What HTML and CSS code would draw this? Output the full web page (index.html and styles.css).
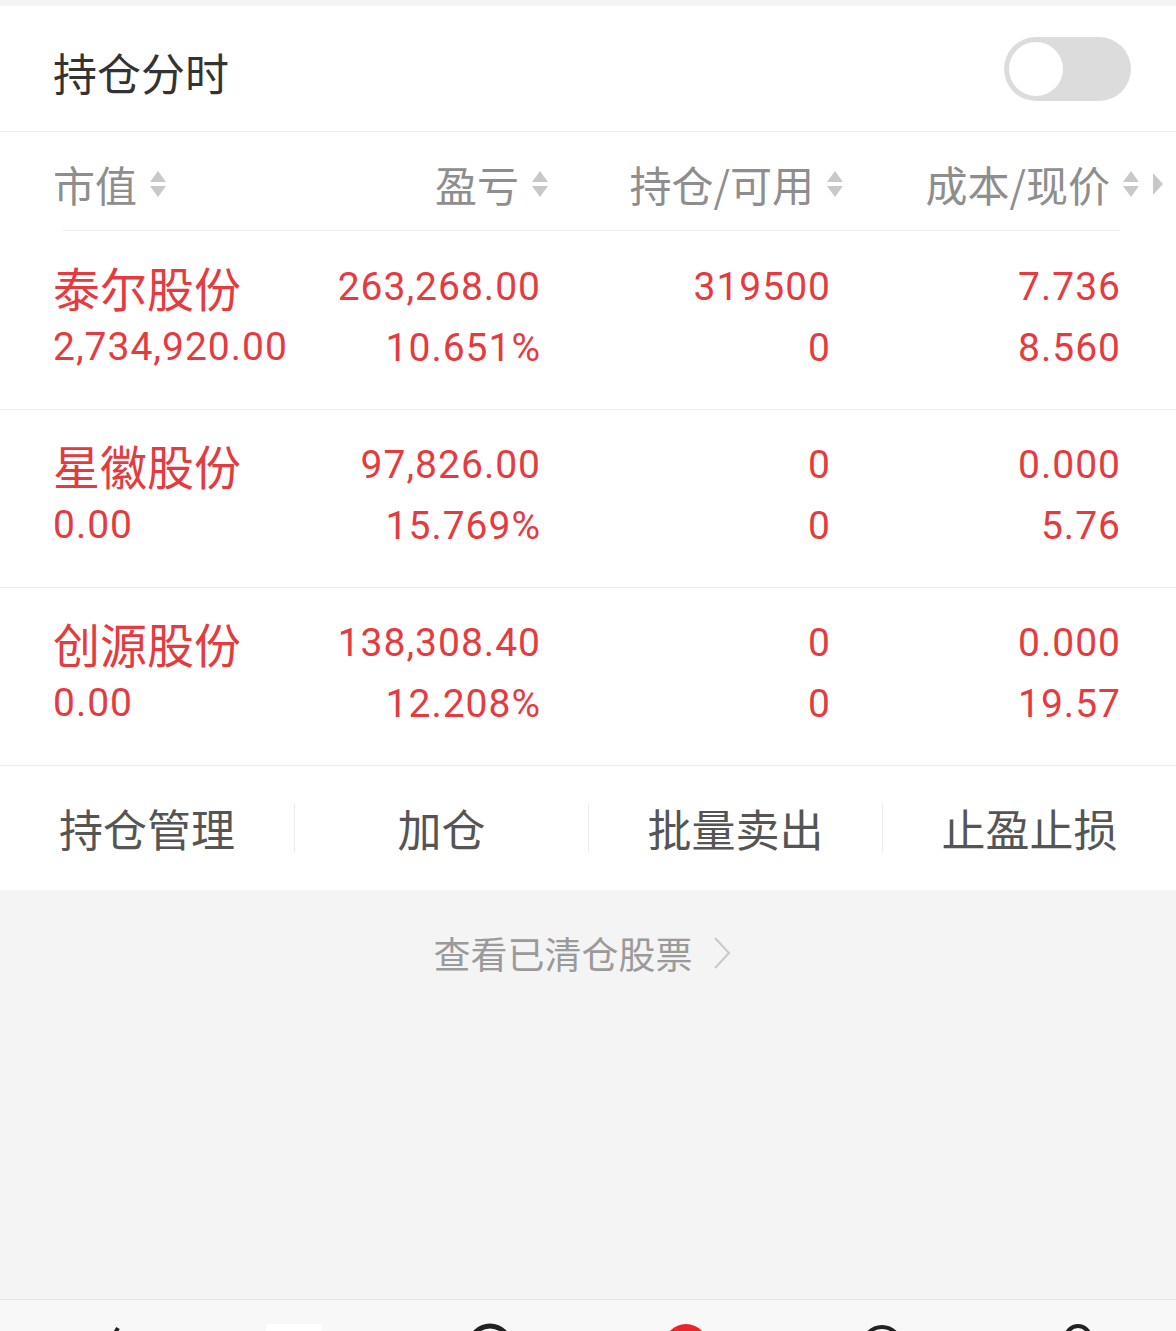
FILE: index.html
```html
<!DOCTYPE html>
<html lang="zh-CN">
<head>
    <meta charset="UTF-8">
    <meta name="viewport" content="width=device-width, initial-scale=1.0">
    <title>持仓</title>
    <link rel="stylesheet" href="styles.css">
</head>
<body>
    <div class="page">
        <div class="title-bar">
            <span class="title">持仓分时</span>
            <div class="toggle"><div class="knob"></div></div>
        </div>

        <div class="head">
            <div class="hcell left">市值<span class="sort"></span></div>
            <div class="hcell">盈亏<span class="sort"></span></div>
            <div class="hcell">持仓/可用<span class="sort"></span></div>
            <div class="hcell">成本/现价<span class="sort"></span></div>
            <div class="more"></div>
        </div>

        <div class="list">
            <div class="row">
                <div class="cell left">
                    <div class="name">泰尔股份</div>
                    <div class="num">2,734,920.00</div>
                </div>
                <div class="cell">
                    <div class="num">263,268.00</div>
                    <div class="num">10.651%</div>
                </div>
                <div class="cell">
                    <div class="num">319500</div>
                    <div class="num">0</div>
                </div>
                <div class="cell">
                    <div class="num">7.736</div>
                    <div class="num">8.560</div>
                </div>
            </div>
            <div class="row">
                <div class="cell left">
                    <div class="name">星徽股份</div>
                    <div class="num">0.00</div>
                </div>
                <div class="cell">
                    <div class="num">97,826.00</div>
                    <div class="num">15.769%</div>
                </div>
                <div class="cell">
                    <div class="num">0</div>
                    <div class="num">0</div>
                </div>
                <div class="cell">
                    <div class="num">0.000</div>
                    <div class="num">5.76</div>
                </div>
            </div>
            <div class="row">
                <div class="cell left">
                    <div class="name">创源股份</div>
                    <div class="num">0.00</div>
                </div>
                <div class="cell">
                    <div class="num">138,308.40</div>
                    <div class="num">12.208%</div>
                </div>
                <div class="cell">
                    <div class="num">0</div>
                    <div class="num">0</div>
                </div>
                <div class="cell">
                    <div class="num">0.000</div>
                    <div class="num">19.57</div>
                </div>
            </div>
        </div>

        <div class="actions">
            <div class="action">持仓管理</div>
            <div class="action">加仓</div>
            <div class="action">批量卖出</div>
            <div class="action">止盈止损</div>
        </div>

        <div class="cleared">
            <div class="link">
                查看已清仓股票
                <svg class="chevron" width="18" height="34" viewBox="0 0 18 34">
                    <polyline points="2,2 16,17 2,32" fill="none" stroke="#c9c9c9" stroke-width="2"/>
                </svg>
            </div>
        </div>

        <div class="tabbar">
            <div class="tab">
                <svg width="48" height="48" viewBox="0 0 48 48"><polyline points="6,40 20,22 30,30 44,6" fill="none" stroke="#222" stroke-width="4"/></svg>
            </div>
            <div class="tab">
                <svg width="60" height="48" viewBox="0 0 60 48"><rect x="2" y="2" width="56" height="40" rx="4" fill="#fff"/></svg>
            </div>
            <div class="tab">
                <svg width="48" height="48" viewBox="0 0 48 48"><circle cx="24" cy="24" r="20" fill="none" stroke="#222" stroke-width="5"/></svg>
            </div>
            <div class="tab">
                <svg width="48" height="48" viewBox="0 0 48 48"><circle cx="24" cy="24" r="22" fill="#e8252d"/></svg>
            </div>
            <div class="tab">
                <svg width="48" height="48" viewBox="0 0 48 48"><circle cx="24" cy="24" r="19" fill="none" stroke="#222" stroke-width="4"/></svg>
            </div>
            <div class="tab">
                <svg width="48" height="48" viewBox="0 0 48 48"><circle cx="24" cy="16" r="12" fill="none" stroke="#222" stroke-width="4"/></svg>
            </div>
        </div>
    </div>
</body>
</html>
```

FILE: styles.css
```css
body {
    margin: 0;
    background: #f5f4f5;
    font-family: "Noto Sans CJK SC", sans-serif;
}
.page {
    height: 1331px;
    overflow: hidden;
    padding-top: 6px;
    box-sizing: border-box;
}
.title-bar {
    height: 126px;
    background: #fff;
    display: flex;
    align-items: center;
    justify-content: space-between;
    padding: 1px 45px 0 53px;
    box-sizing: border-box;
    border-bottom: 1px solid #ededed;
}
.title {
    font-size: 44px;
    color: #333;
    margin-top: 5px;
}
.toggle {
    width: 127px;
    height: 64px;
    border-radius: 32px;
    background: #dcdcdc;
    display: flex;
    align-items: center;
    padding-left: 5px;
    box-sizing: border-box;
}
.knob {
    width: 54px;
    height: 54px;
    border-radius: 50%;
    background: #fff;
}
.head {
    height: 99px;
    background: #fff;
    display: grid;
    grid-template-columns: 200px 295px 295px 296px 1fr;
    align-items: center;
    padding: 4px 0 0 53px;
    box-sizing: border-box;
    position: relative;
}
.head::after {
    content: "";
    position: absolute;
    left: 63px;
    right: 56px;
    bottom: 0;
    border-bottom: 1px solid #eeeeee;
}
.hcell {
    font-size: 42px;
    color: #8e8e8e;
    display: flex;
    align-items: center;
    justify-content: flex-end;
}
.hcell.left {
    justify-content: flex-start;
}
.sort {
    display: inline-flex;
    flex-direction: column;
    gap: 4px;
    margin-left: 13px;
}
.sort::before,
.sort::after {
    content: "";
    width: 0;
    height: 0;
    border-left: 8px solid transparent;
    border-right: 8px solid transparent;
}
.sort::before {
    border-bottom: 11px solid #c8c8c8;
}
.sort::after {
    border-top: 11px solid #c8c8c8;
}
.more {
    justify-self: start;
    margin-left: 14px;
    width: 0;
    height: 0;
    border-top: 11px solid transparent;
    border-bottom: 11px solid transparent;
    border-left: 10px solid #c8c8c8;
}
.list {
    background: #fff;
    padding-top: 1px;
}
.row {
    height: 178px;
    display: grid;
    grid-template-columns: 198px 290px 290px 290px;
    padding: 25px 0 0 53px;
    box-sizing: border-box;
    border-bottom: 1px solid #ececec;
    color: #e53b3f;
}
.cell {
    text-align: right;
    white-space: nowrap;
}
.cell.left {
    text-align: left;
}
.name {
    font-size: 47px;
    line-height: 60px;
}
.num {
    font-family: Roboto, sans-serif;
    font-size: 39px;
    line-height: 61px;
    letter-spacing: 1px;
}
.actions {
    height: 124px;
    background: #fff;
    display: grid;
    grid-template-columns: repeat(4, 1fr);
    align-items: center;
}
.action {
    font-size: 44px;
    color: #555;
    text-align: center;
    line-height: 50px;
    border-left: 1px solid #ececec;
}
.action:first-child {
    border-left: none;
}
.cleared {
    height: 410px;
    border-bottom: 1px solid #e4e4e4;
    box-sizing: border-box;
    padding-top: 38px;
}
.link {
    display: flex;
    align-items: center;
    justify-content: center;
    gap: 20px;
    font-size: 37px;
    line-height: 50px;
    color: #9a9a9a;
    padding-right: 12px;
}
.tabbar {
    height: 31px;
    background: #f8f8f8;
    display: grid;
    grid-template-columns: repeat(6, 1fr);
    overflow: hidden;
}
.tab {
    display: flex;
    justify-content: center;
    padding-top: 22px;
}
```
